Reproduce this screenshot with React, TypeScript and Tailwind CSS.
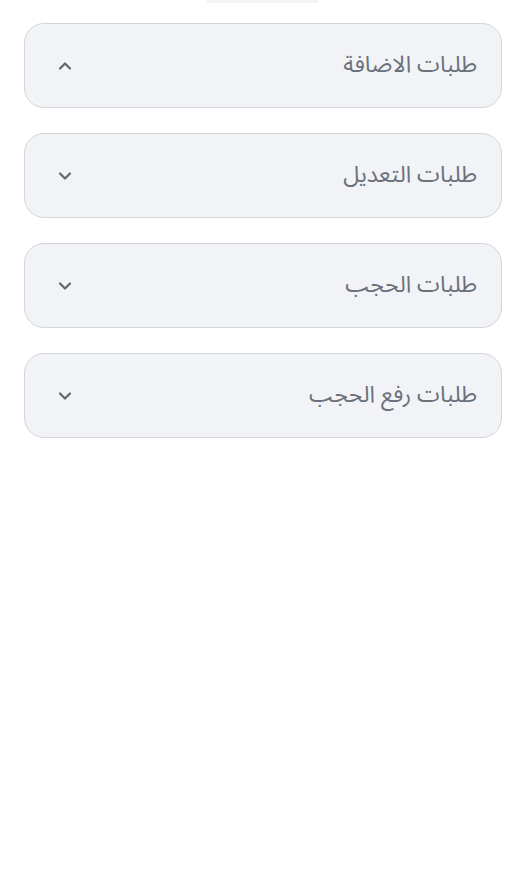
import React from "react";

const items = [
  { label: "طلبات الاضافة", open: true },
  { label: "طلبات التعديل", open: false },
  { label: "طلبات الحجب", open: false },
  { label: "طلبات رفع الحجب", open: false },
];

function Chevron({ up }: { up: boolean }) {
  return (
    <svg width="16" height="16" viewBox="0 0 16 16" fill="none">
      <path
        d={up ? "M3 10.5 L8 5.5 L13 10.5" : "M3 5.5 L8 10.5 L13 5.5"}
        stroke="#5f6670"
        strokeWidth="2.2"
        strokeLinecap="round"
        strokeLinejoin="round"
      />
    </svg>
  );
}

export default function App() {
  return (
    <div className="w-[526px] h-[884px] bg-white relative" style={{ fontFamily: '"Noto Sans Arabic", "Noto Sans", "DejaVu Sans", sans-serif' }}>
      <div className="absolute top-0 left-[207px] w-[111px] h-[3px] bg-[#f3f4f6]" />
      <div className="flex flex-col gap-[25px] pt-[23px] px-[24px]">
        {items.map((it) => (
          <div
            key={it.label}
            dir="rtl"
            className="h-[85px] rounded-[20px] border border-[#d2d5d9] bg-[#f2f3f6] flex items-center justify-between pr-[24px] pl-[32px]"
          >
            <span className="text-[23px] text-[#6b717b]">{it.label}</span>
            <Chevron up={it.open} />
          </div>
        ))}
      </div>
    </div>
  );
}
